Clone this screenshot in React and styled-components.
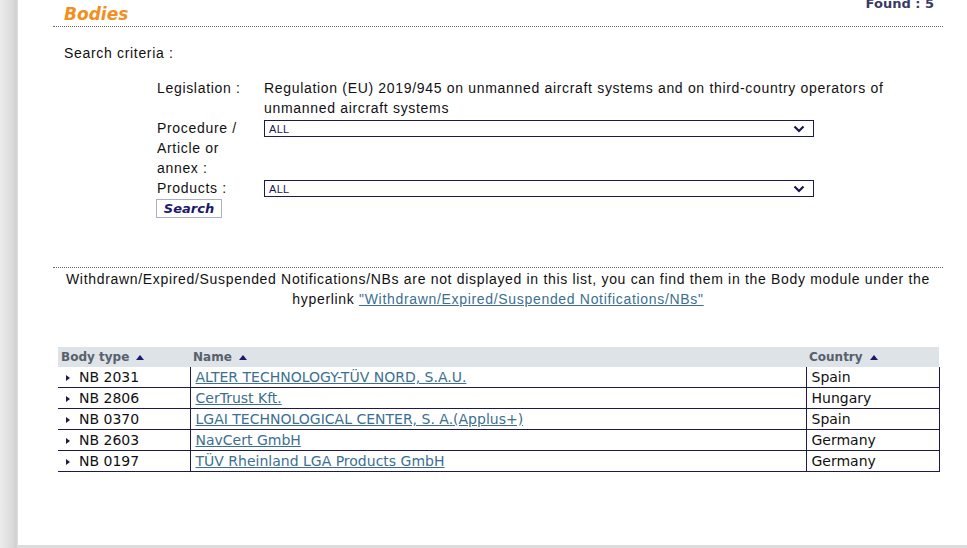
import styled, { createGlobalStyle } from "styled-components";

const GlobalStyle = createGlobalStyle`
  html, body {
    margin: 0;
    padding: 0;
    background: #dcdcdc;
  }
  body {
    font-family: "Liberation Sans", Arial, sans-serif;
    color: #111;
  }
`;

const bodies = [
  { type: "NB 2031", name: "ALTER TECHNOLOGY-TÜV NORD, S.A.U.", country: "Spain" },
  { type: "NB 2806", name: "CerTrust Kft.", country: "Hungary" },
  { type: "NB 0370", name: "LGAI TECHNOLOGICAL CENTER, S. A.(Applus+)", country: "Spain" },
  { type: "NB 2603", name: "NavCert GmbH", country: "Germany" },
  { type: "NB 0197", name: "TÜV Rheinland LGA Products GmbH", country: "Germany" },
];

function Chevron() {
  return (
    <svg width="12" height="8" viewBox="0 0 12 8">
      <path d="M1.5 1.5 L6 6 L10.5 1.5" fill="none" stroke="#1c1850" strokeWidth="2.2" />
    </svg>
  );
}

function App() {
  return (
    <>
      <GlobalStyle />
      <Page>
        <Rail />
        <Main>
          <TitleBar>
            <Title>Bodies</Title>
            <Found>Found : 5</Found>
          </TitleBar>

          <Criteria>Search criteria :</Criteria>

          <Form>
            <Label>Legislation :</Label>
            <Value>
              Regulation (EU) 2019/945 on unmanned aircraft systems and on third-country operators of
              unmanned aircraft systems
            </Value>

            <Label>Procedure / Article or annex :</Label>
            <Select>
              <span>ALL</span>
              <Chevron />
            </Select>

            <Label>Products :</Label>
            <Select>
              <span>ALL</span>
              <Chevron />
            </Select>

            <SearchButton>Search</SearchButton>
          </Form>

          <Divider />
          <Notice>
            Withdrawn/Expired/Suspended Notifications/NBs are not displayed in this list, you can find them in the Body module under the
            <br />
            hyperlink <Link href="#">"Withdrawn/Expired/Suspended Notifications/NBs"</Link>
          </Notice>

          <Table>
            <colgroup>
              <col style={{ width: 132 }} />
              <col style={{ width: 616 }} />
              <col style={{ width: 133 }} />
            </colgroup>
            <thead>
              <tr>
                <Th>Body type <SortUp /></Th>
                <Th>Name <SortUp /></Th>
                <Th>Country <SortUp /></Th>
              </tr>
            </thead>
            <tbody>
              {bodies.map((b) => (
                <tr key={b.type}>
                  <Td $first>
                    <Bullet />
                    {b.type}
                  </Td>
                  <Td>
                    <Link href="#">{b.name}</Link>
                  </Td>
                  <Td $last>{b.country}</Td>
                </tr>
              ))}
            </tbody>
          </Table>
        </Main>
      </Page>
    </>
  );
}

export default App;

const Page = styled.div`
  display: flex;
  height: 548px;
  overflow: hidden;
`;

const Rail = styled.div`
  width: 18px;
  flex-shrink: 0;
  background: linear-gradient(to right, #ececec, #dadada 70%, #cfcfcf 90%, #e4e4e4);
`;

const Main = styled.div`
  flex: 1;
  height: 545px;
  background: #fff;
  display: flex;
  flex-direction: column;
`;

const TitleBar = styled.div`
  margin: 0 24px 0 35px;
  height: 26px;
  border-bottom: 1px dotted #666;
  display: flex;
  justify-content: space-between;
  align-items: flex-start;
`;

const Title = styled.h1`
  margin: 4px 0 0 11px;
  font-family: "DejaVu Sans", Verdana, sans-serif;
  font-size: 17px;
  font-style: italic;
  font-weight: bold;
  color: #f0901e;
  line-height: 20px;
`;

const Found = styled.div`
  margin: -4px 9px 0 0;
  font-family: "DejaVu Sans", Verdana, sans-serif;
  font-size: 13px;
  font-weight: bold;
  color: #3a3a68;
  line-height: 16px;
`;

const Criteria = styled.div`
  margin: 16px 0 0 46px;
  font-size: 14px;
  letter-spacing: 0.68px;
  line-height: 20px;
`;

const Form = styled.div`
  margin: 15px 0 0 139px;
  display: grid;
  grid-template-columns: 107px 550px;
  font-size: 14px;
  letter-spacing: 0.68px;
  line-height: 20px;
`;

const Label = styled.div`
  width: 84px;
`;

const Value = styled.div`
  width: 640px;
`;

const Select = styled.div`
  margin-top: 2px;
  height: 15px;
  border: 1px solid #1c1850;
  display: flex;
  align-items: center;
  justify-content: space-between;
  padding: 0 8px 0 4px;
  font-size: 11px;
  letter-spacing: 0.3px;
  color: #1c1850;
  align-self: start;
`;

const SearchButton = styled.button`
  grid-column: 1;
  width: 66px;
  height: 19px;
  margin: 1px 0 0 -1px;
  padding: 0;
  background: #fff;
  border: 1px solid #aab0c8;
  font-family: "DejaVu Sans", Verdana, sans-serif;
  font-size: 13px;
  font-weight: bold;
  font-style: italic;
  color: #1c1870;
  line-height: 16px;
`;

const Divider = styled.div`
  margin: 49px 24px 0 35px;
  border-top: 1px dotted #666;
`;

const Notice = styled.p`
  margin: 1px 24px 0 35px;
  text-align: center;
  font-size: 14px;
  letter-spacing: 0.68px;
  line-height: 20px;
`;

const Link = styled.a`
  color: #3c7090;
  text-decoration: underline;
`;

const Table = styled.table`
  margin: 38px 0 0 40px;
  width: 881px;
  border-collapse: collapse;
  table-layout: fixed;
  font-family: "DejaVu Sans", Verdana, sans-serif;
  font-size: 14px;
`;

const Th = styled.th`
  height: 20px;
  padding: 0 3px;
  background: #dde3e7;
  text-align: left;
  font-size: 12px;
  font-weight: bold;
  color: #57606c;
  white-space: nowrap;
`;

const SortUp = styled.span`
  display: inline-block;
  width: 0;
  height: 0;
  margin-left: 3px;
  border-left: 4px solid transparent;
  border-right: 4px solid transparent;
  border-bottom: 5px solid #1c1870;
  vertical-align: 1px;
`;

const Td = styled.td`
  height: 20px;
  padding: 0 ${({ $first }) => ($first ? "4px" : "5px")};
  line-height: 20px;
  border-bottom: 1px solid #1c1850;
  border-left: ${({ $first }) => ($first ? "none" : "1px solid #1c1850")};
  border-right: ${({ $last }) => ($last ? "1px solid #1c1850" : "none")};
  white-space: nowrap;
  overflow: hidden;
  color: #111;
`;

const Bullet = styled.span`
  display: inline-block;
  width: 0;
  height: 0;
  margin: 0 9px 0 4px;
  border-top: 3px solid transparent;
  border-bottom: 3px solid transparent;
  border-left: 4px solid #1c1850;
  vertical-align: 1px;
`;
